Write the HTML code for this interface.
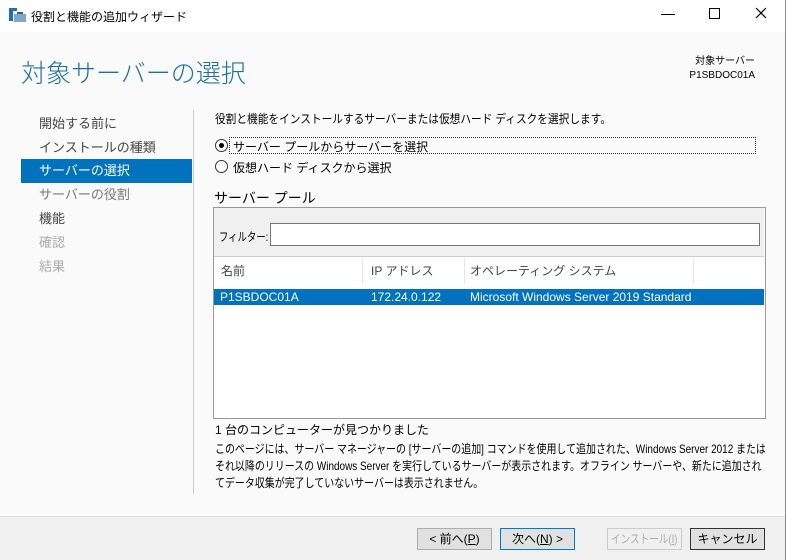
<html><head><style>
html,body{margin:0;width:786px;height:560px;overflow:hidden}
body{position:relative;background:#fafafa;font-family:"Liberation Sans","Noto Sans CJK JP",sans-serif;font-size:12px;color:#000}
.a{position:absolute;white-space:nowrap}
.nav{position:absolute;left:21px;width:171px;height:24px;line-height:24px;padding-left:18px;box-sizing:border-box;font-size:13px;color:#444}
.btn{position:absolute;top:528px;height:22px;line-height:20px;box-sizing:border-box;border:1px solid #adadad;background:#e1e1e1;text-align:center;font-size:12px;white-space:nowrap;overflow:hidden}
.sx{display:inline-block;transform-origin:0 0}
</style></head><body>
<div class="a" style="left:0;top:0;width:786px;height:32px;background:#fff"></div>
<svg class="a" style="left:9px;top:8px" width="18" height="14"><rect x="0" y="0" width="4" height="13" fill="#1e6fb8"/><rect x="4" y="0" width="4" height="3" fill="#1e6fb8"/><rect x="5" y="6" width="12" height="8" fill="#7da7cf"/><rect x="8" y="4" width="6" height="2" fill="#555"/></svg>
<div class="a" style="left:31px;top:8px;font-size:12px">役割と機能の追加ウィザード</div>
<div class="a" style="left:661px;top:14px;width:14px;height:1px;background:#000"></div>
<div class="a" style="left:709px;top:8px;width:9px;height:9px;border:1px solid #000"></div>
<svg class="a" style="left:755px;top:7px" width="12" height="12"><path d="M1 1L11 11M11 1L1 11" stroke="#000" stroke-width="1.2"/></svg>
<div class="a" style="left:21px;top:54px;font-size:25px;color:#1a6fa8;font-weight:300">対象サーバーの選択</div>
<div class="a" style="left:680px;top:55px;width:75px;text-align:right;font-size:10px;line-height:14px">対象サーバー<br>P1SBDOC01A</div>
<div class="nav" style="top:112px">開始する前に</div>
<div class="nav" style="top:136px">インストールの種類</div>
<div class="nav" style="top:159px;background:#0072be;color:#fff">サーバーの選択</div>
<div class="nav" style="top:183px;color:#777">サーバーの役割</div>
<div class="nav" style="top:207px">機能</div>
<div class="nav" style="top:231px;color:#aaa">確認</div>
<div class="nav" style="top:255px;color:#aaa">結果</div>
<div class="a" style="left:193px;top:110px;width:1px;height:384px;background:#ccc"></div>
<div class="a" style="left:215px;top:110px"><span class="sx" style="transform:scaleX(0.89)">役割と機能をインストールするサーバーまたは仮想ハード ディスクを選択します。</span></div>
<div class="a" style="left:215px;top:139px;width:11px;height:11px;border:1px solid #333;border-radius:50%;background:#fff"></div>
<div class="a" style="left:219px;top:143px;width:5px;height:5px;border-radius:50%;background:#000"></div>
<div class="a" style="left:229px;top:137px;width:525px;height:15px;border:1px dotted #333"></div>
<div class="a" style="left:233px;top:138px">サーバー プールからサーバーを選択</div>
<div class="a" style="left:215px;top:160px;width:11px;height:11px;border:1px solid #333;border-radius:50%;background:#fff"></div>
<div class="a" style="left:233px;top:159px">仮想ハード ディスクから選択</div>
<div class="a" style="left:214px;top:188px;font-size:14px">サーバー プール</div>
<div class="a" style="left:213px;top:207px;width:551px;height:210px;border:1px solid #999;background:#fff"></div>
<div class="a" style="left:214px;top:208px;width:550px;height:48px;background:#f0f0f0;border-bottom:1px solid #ccc"></div>
<div class="a" style="left:219px;top:228px"><span class="sx" style="transform:scaleX(0.78)">フィルター:</span></div>
<div class="a" style="left:270px;top:223px;width:488px;height:21px;border:1px solid #777;background:#fff"></div>
<div class="a" style="left:362px;top:258px;width:1px;height:26px;background:#e5e5e5"></div>
<div class="a" style="left:464px;top:258px;width:1px;height:26px;background:#e5e5e5"></div>
<div class="a" style="left:693px;top:258px;width:1px;height:26px;background:#e5e5e5"></div>
<div class="a" style="left:221px;top:262px;color:#444">名前</div>
<div class="a" style="left:371px;top:262px;color:#444">IP アドレス</div>
<div class="a" style="left:470px;top:262px;color:#444">オペレーティング システム</div>
<div class="a" style="left:214px;top:289px;width:550px;height:16px;background:#0072be"></div>
<div class="a" style="left:220px;top:290px;color:#fff">P1SBDOC01A</div>
<div class="a" style="left:371px;top:290px;color:#fff">172.24.0.122</div>
<div class="a" style="left:470px;top:290px;color:#fff">Microsoft Windows Server 2019 Standard</div>
<div class="a" style="left:215px;top:421px">1 台のコンピューターが見つかりました</div>
<div class="a" style="left:215px;top:441px;line-height:17px"><span class="sx" style="transform:scaleX(0.83)">このページには、サーバー マネージャーの [サーバーの追加] コマンドを使用して追加された、Windows Server 2012 または<br>それ以降のリリースの Windows Server を実行しているサーバーが表示されます。オフライン サーバーや、新たに追加され<br>てデータ収集が完了していないサーバーは表示されません。</span></div>
<div class="a" style="left:0;top:516px;width:786px;height:44px;background:#f0f0f0;border-top:1px solid #ddd"></div>
<div class="btn" style="left:417px;width:75px">&lt; 前へ(<u>P</u>)</div>
<div class="btn" style="left:500px;width:75px;border-color:#0078d7">次へ(<u>N</u>) &gt;</div>
<div class="btn" style="left:607px;width:75px;color:#aaa;border-color:#ccc;background:#f0f0f0;text-align:left"><span class="sx" style="transform:scaleX(0.8);margin-left:3px">インストール(<u>I</u>)</span></div>
<div class="btn" style="left:690px;width:75px;border-color:#333">キャンセル</div>
<div class="a" style="left:785px;top:0;width:1px;height:560px;background:#888"></div>
</body></html>
